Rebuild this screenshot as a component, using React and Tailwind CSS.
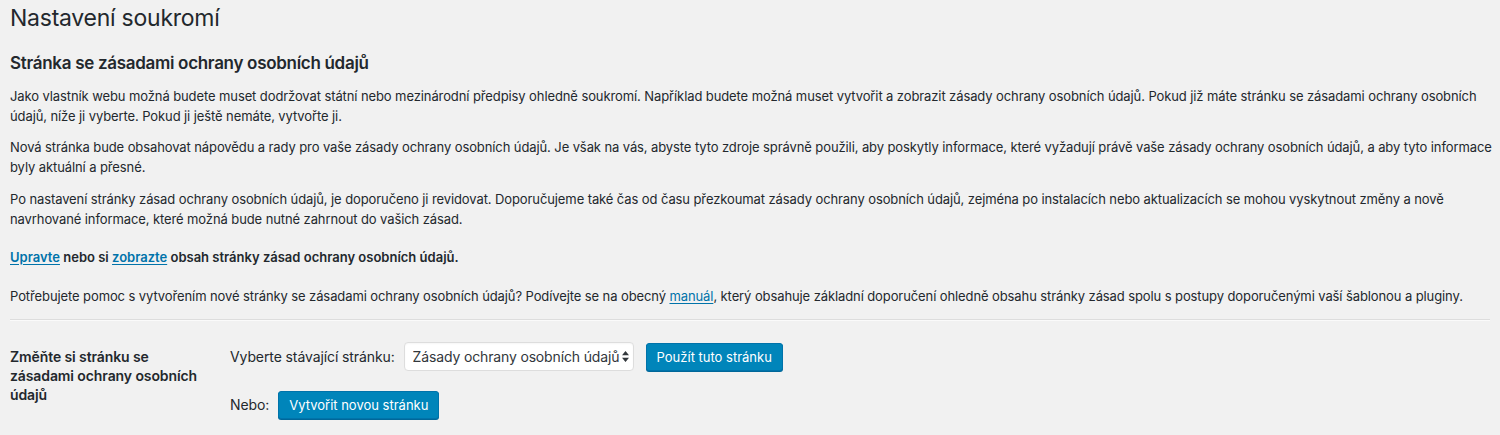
import { useState } from 'react';

const font = { fontFamily: 'Inter, "Noto Sans", sans-serif' };

const PrimaryButton = ({ children }) => (
  <button
    type="button"
    className="h-[28px] px-[10px] rounded-[3px] border border-[#0073aa] bg-[#0085ba] text-white text-[13px] leading-[26px] tracking-normal shadow-[0_1px_0_#006799] whitespace-nowrap"
  >
    {children}
  </button>
);

const App = () => {
  const [page, setPage] = useState('privacy');

  return (
    <div className="min-h-[435px] bg-[#f1f1f1] text-[#23282d] text-[13px] leading-[19.5px] tracking-[-0.1px] overflow-hidden" style={font}>
      <div className="pl-[10px] pr-[10px]">
        <h1 className="text-[23px] leading-[30px] font-normal tracking-[-0.25px] pt-[3px]">Nastavení soukromí</h1>

        <h2 className="text-[17px] leading-[22px] font-semibold tracking-[-0.3px] mt-[19px]">
          Stránka se zásadami ochrany osobních údajů
        </h2>

        <div className="-mr-[10px]">
          <p className="mt-[13px]">
            Jako vlastník webu možná budete muset dodržovat státní nebo mezinárodní předpisy ohledně soukromí. Například budete možná muset vytvořit a zobrazit zásady ochrany osobních údajů. Pokud již máte stránku se zásadami ochrany osobních údajů, níže ji vyberte. Pokud ji ještě nemáte, vytvořte ji.
          </p>
          <p className="mt-[12px]">
            Nová stránka bude obsahovat nápovědu a rady pro vaše zásady ochrany osobních údajů. Je však na vás, abyste tyto zdroje správně použili, aby poskytly informace, které vyžadují právě vaše zásady ochrany osobních údajů, a aby tyto informace byly aktuální a přesné.
          </p>
          <p className="mt-[13px]">
            Po nastavení stránky zásad ochrany osobních údajů, je doporučeno ji revidovat. Doporučujeme také čas od času přezkoumat zásady ochrany osobních údajů, zejména po instalacích nebo aktualizacích se mohou vyskytnout změny a nově navrhované informace, které možná bude nutné zahrnout do vašich zásad.
          </p>
          <p className="mt-[19px] font-semibold tracking-normal">
            <a href="#" className="text-[#0073aa] underline underline-offset-2">Upravte</a> nebo si{' '}
            <a href="#" className="text-[#0073aa] underline underline-offset-2">zobrazte</a> obsah stránky zásad ochrany osobních údajů.
          </p>
          <p className="mt-[19px]">
            Potřebujete pomoc s vytvořením nové stránky se zásadami ochrany osobních údajů? Podívejte se na obecný{' '}
            <a href="#" className="text-[#0073aa] underline underline-offset-2">manuál</a>, který obsahuje základní doporučení ohledně obsahu stránky zásad spolu s postupy doporučenými vaší šablonou a pluginy.
          </p>
        </div>

        <hr className="mt-[13px] border-0 border-t border-t-[#ddd] border-b border-b-[#fafafa]" />

        <div className="flex pt-[25px]">
          <div className="w-[200px] mr-[10px] font-semibold text-[14px] leading-[19px] pt-[1px]">
            Změňte si stránku se zásadami ochrany osobních údajů
          </div>
          <div className="pl-[10px] flex flex-col gap-[20px]">
            <div className="flex items-center h-[29px] -mt-[4px] text-[14px]">
              <span>Vyberte stávající stránku:</span>
              <div className="relative ml-[9px]">
                <select
                  value={page}
                  onChange={(e) => setPage(e.target.value)}
                  className="appearance-none h-[29px] w-[230px] pl-[8px] pr-[10px] bg-white border border-[#ddd] rounded-[4px] text-[14px] tracking-[-0.15px] text-[#32373c] shadow-[inset_0_1px_2px_rgba(0,0,0,0.04)]"
                  style={font}
                >
                  <option value="privacy">Zásady ochrany osobních údajů</option>
                </select>
                <svg className="absolute right-[5px] top-[9px] pointer-events-none" width="7" height="11" viewBox="0 0 7 11">
                  <path d="M3.5 0 L7 4.3 H0 Z M3.5 11 L7 6.7 H0 Z" fill="#32373c" />
                </svg>
              </div>
              <div className="ml-[12px]">
                <PrimaryButton>Použít tuto stránku</PrimaryButton>
              </div>
            </div>
            <div className="flex items-center text-[14px]">
              <span>Nebo:</span>
              <div className="ml-[9px]">
                <PrimaryButton>Vytvořit novou stránku</PrimaryButton>
              </div>
            </div>
          </div>
        </div>
      </div>
    </div>
  );
};

export default App;
